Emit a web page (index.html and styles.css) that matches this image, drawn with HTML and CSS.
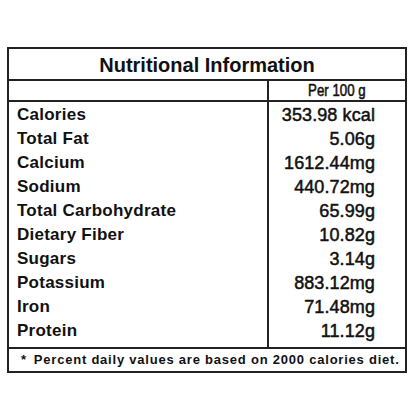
FILE: index.html
```html
<!DOCTYPE html>
<html>
<head>
<meta charset="utf-8">
<link rel="stylesheet" href="styles.css">
</head>
<body>
<div class="panel">
  <div class="title">Nutritional Information</div>
  <div class="head">
    <div class="head-left"></div>
    <div class="head-right"><span class="per">Per 100 g</span></div>
  </div>
  <div class="body">
    <div class="names">
      <div class="row">Calories</div>
      <div class="row">Total Fat</div>
      <div class="row">Calcium</div>
      <div class="row">Sodium</div>
      <div class="row">Total Carbohydrate</div>
      <div class="row">Dietary Fiber</div>
      <div class="row">Sugars</div>
      <div class="row">Potassium</div>
      <div class="row">Iron</div>
      <div class="row">Protein</div>
    </div>
    <div class="values">
      <div class="row">353.98 kcal</div>
      <div class="row">5.06g</div>
      <div class="row">1612.44mg</div>
      <div class="row">440.72mg</div>
      <div class="row">65.99g</div>
      <div class="row">10.82g</div>
      <div class="row">3.14g</div>
      <div class="row">883.12mg</div>
      <div class="row">71.48mg</div>
      <div class="row">11.12g</div>
    </div>
  </div>
  <div class="foot"><span class="star">*</span>Percent daily values are based on 2000 calories diet.</div>
</div>
</body>
</html>
```

FILE: styles.css
```css
html, body {
  margin: 0;
  padding: 0;
  background: #ffffff;
}
body {
  padding: 47px 0 0 7px;
  font-family: "Liberation Sans", Arial, sans-serif;
  color: #111;
}
.panel {
  width: 396px;
  height: 322px;
  border: 2px solid #222;
  display: flex;
  flex-direction: column;
}
.title {
  height: 28px;
  padding-top: 2px;
  line-height: 28px;
  font-size: 20px;
  font-weight: bold;
  text-align: center;
  border-bottom: 2px solid #222;
}
.head {
  display: flex;
  height: 19px;
  border-bottom: 2px solid #222;
}
.head-left {
  width: 258px;
}
.head-right {
  flex: 1;
  border-left: 2px solid #222;
  text-align: center;
  line-height: 19px;
  font-size: 17px;
}
.per {
  display: inline-block;
  transform: scaleX(0.78);
  -webkit-text-stroke: 0.55px #111;
}
.body {
  display: flex;
  height: 245px;
}
.names {
  width: 250px;
  padding: 1px 0 0 8px;
  font-size: 17px;
  font-weight: bold;
  letter-spacing: 0.25px;
}
.values {
  flex: 1;
  border-left: 2px solid #222;
  padding: 1px 30px 0 0;
  text-align: right;
  font-size: 18px;
  letter-spacing: 0.1px;
  -webkit-text-stroke: 0.5px #111;
}
.row {
  height: 24px;
  line-height: 24px;
  white-space: nowrap;
}
.foot {
  flex: 1;
  border-top: 2px solid #222;
  padding-left: 12px;
  line-height: 21px;
  font-size: 13px;
  font-weight: bold;
  letter-spacing: 0.78px;
  white-space: nowrap;
}
.star {
  margin-right: 7px;
}
```
